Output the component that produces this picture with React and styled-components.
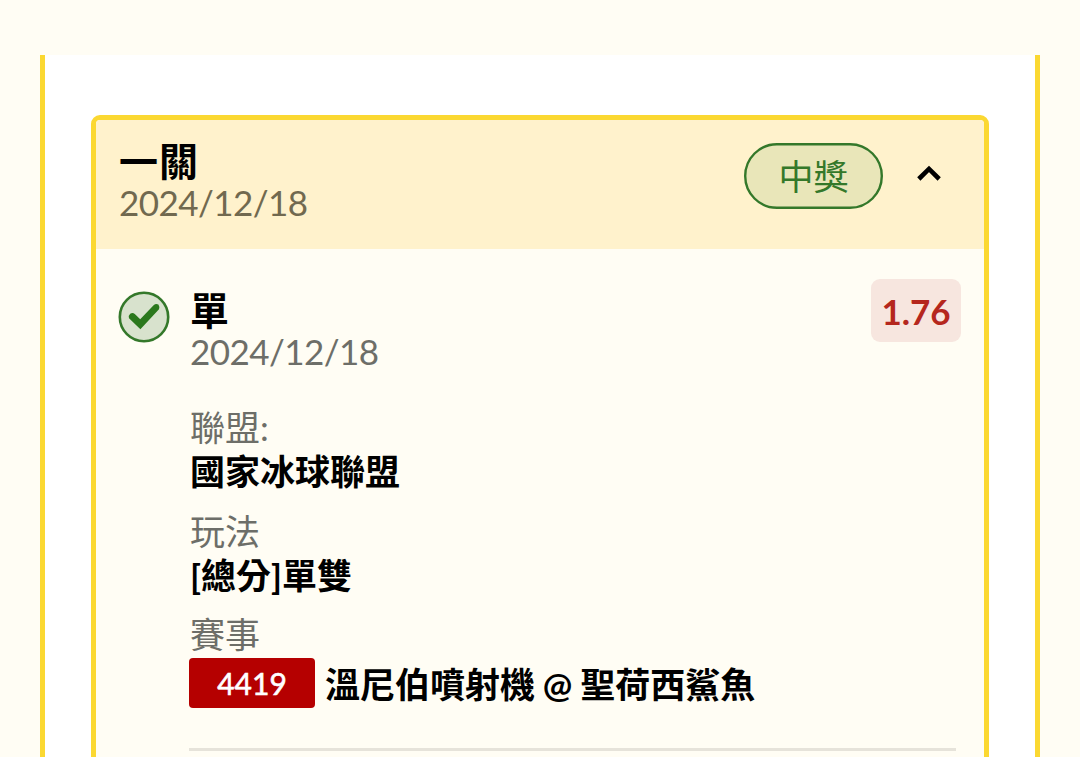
import React from 'react';
import styled, { createGlobalStyle } from 'styled-components';

export default function App() {
  return (
    <>
      <GlobalStyle />
      <Page>
        <Panel>
          <Card>
            <CardHeader>
              <Heading>
                <Title>一關</Title>
                <DateText $color="#71694f">2024/12/18</DateText>
              </Heading>
              <Status>
                <Pill viewBox="0 0 139 66">
                  <rect x="1.2" y="1.2" width="136.6" height="63.6" rx="31.8" />
                </Pill>
                <StatusText>中獎</StatusText>
              </Status>
              <Chevron viewBox="0 0 26 18">
                <path d="M2.8 14 L13 3.9 L23.2 14" />
              </Chevron>
            </CardHeader>
            <CardBody>
              <CheckIcon viewBox="0 0 52 52">
                <circle cx="26" cy="26" r="24.2" />
                <path
                  d="M11 27.2 Q10 24.8 12.2 22.8 Q14.6 21 16.8 23 L22.2 28.2 L35.6 14.2 Q38 12 40.4 13.6 Q41.8 15.6 41 18.2 L22.4 38.2 Z"
                />
              </CheckIcon>
              <Details>
                <DetailsTop>
                  <Heading>
                    <Title>單</Title>
                    <DateText $color="#6d6e68">2024/12/18</DateText>
                  </Heading>
                  <Odds>1.76</Odds>
                </DetailsTop>
                <Field>
                  <Label>聯盟:</Label>
                  <Value>國家冰球聯盟</Value>
                </Field>
                <Field>
                  <Label>玩法</Label>
                  <Value>[總分]單雙</Value>
                </Field>
                <Field>
                  <Label>賽事</Label>
                  <Match>
                    <MatchCode>4419</MatchCode>
                    <Value>溫尼伯噴射機 @ 聖荷西鯊魚</Value>
                  </Match>
                </Field>
                <Divider />
              </Details>
            </CardBody>
          </Card>
        </Panel>
      </Page>
    </>
  );
}

const GlobalStyle = createGlobalStyle`
  * {
    box-sizing: border-box;
  }

  body {
    margin: 0;
    overflow: hidden;
    background: #fffdf4;
    font-family: Lato, 'Noto Sans CJK TC', sans-serif;
  }
`;

const Page = styled.div`
  height: 757px;
  padding: 55px 40px 0;
  overflow: hidden;
`;

const Panel = styled.div`
  height: 760px;
  padding: 60px 46px 0;
  background: #fff;
  border: solid #fbd831;
  border-width: 0 5px;
`;

const Card = styled.div`
  height: 700px;
  overflow: hidden;
  background: #fffdf4;
  border: 5px solid #fbd831;
  border-radius: 9px;
`;

const CardHeader = styled.div`
  display: flex;
  align-items: flex-start;
  height: 129px;
  padding: 19px 42px 0 23px;
  background: #fff2cc;
`;

const Heading = styled.div`
  flex: 1;
`;

const Title = styled.div`
  height: 42px;
  font-size: 39px;
  font-weight: 700;
  line-height: 44px;
  letter-spacing: 1px;
  color: #000;
`;

const DateText = styled.div`
  height: 42px;
  font-size: 35px;
  line-height: 42px;
  letter-spacing: -0.55px;
  color: ${(props) => props.$color};
`;

const Status = styled.div`
  display: grid;
  width: 139px;
  height: 66px;
  margin-top: 4px;
`;

const Pill = styled.svg`
  grid-area: 1 / 1;
  width: 139px;
  height: 66px;
  fill: #e9e6b9;
  stroke: #34782a;
  stroke-width: 2.4;
`;

const StatusText = styled.span`
  grid-area: 1 / 1;
  font-size: 35px;
  line-height: 67px;
  text-align: center;
  color: #34782a;
`;

const Chevron = styled.svg`
  width: 26px;
  height: 18px;
  margin: 26px 0 0 33px;
  fill: none;
  stroke: #000;
  stroke-width: 4.6;
`;

const CardBody = styled.div`
  display: flex;
  align-items: flex-start;
  padding: 30px 23px 0 22px;
`;

const CheckIcon = styled.svg`
  flex: none;
  width: 52px;
  height: 52px;
  margin: 12px 19px 0 0;

  circle {
    fill: #d8e2cd;
    stroke: #34782a;
    stroke-width: 2.6;
  }

  path {
    fill: #2b781d;
  }
`;

const Details = styled.div`
  flex: 1;
`;

const DetailsTop = styled.div`
  display: flex;
  height: 127px;
  padding: 9px 0 0 1px;
`;

const Odds = styled.div`
  width: 90px;
  height: 63px;
  margin-top: -9px;
  border-radius: 9px;
  background: #f7e6df;
  font-size: 35px;
  font-weight: 700;
  line-height: 64px;
  text-align: center;
  color: #b5271d;
`;

const Field = styled.div`
  height: 103.5px;
`;

const Label = styled.div`
  height: 43px;
  padding-left: 1px;
  font-size: 35px;
  line-height: 43px;
  color: #6d6e68;
`;

const Value = styled.div`
  height: 43px;
  padding-left: 1px;
  font-size: 35px;
  font-weight: 700;
  line-height: 44px;
  white-space: nowrap;
  color: #000;
`;

const Match = styled.div`
  display: flex;
  align-items: center;
  gap: 9px;
  height: 50px;
  margin-top: 2px;
  word-spacing: -0.7px;
`;

const MatchCode = styled.div`
  width: 126px;
  height: 50px;
  border-radius: 4px;
  background: #b50000;
  font-size: 30px;
  line-height: 51px;
  text-align: center;
  color: #fff;
  -webkit-text-stroke: 0.6px #fff;
`;

const Divider = styled.div`
  height: 3px;
  margin: 31px 5px 0 0;
  background: #e6e3da;
`;
